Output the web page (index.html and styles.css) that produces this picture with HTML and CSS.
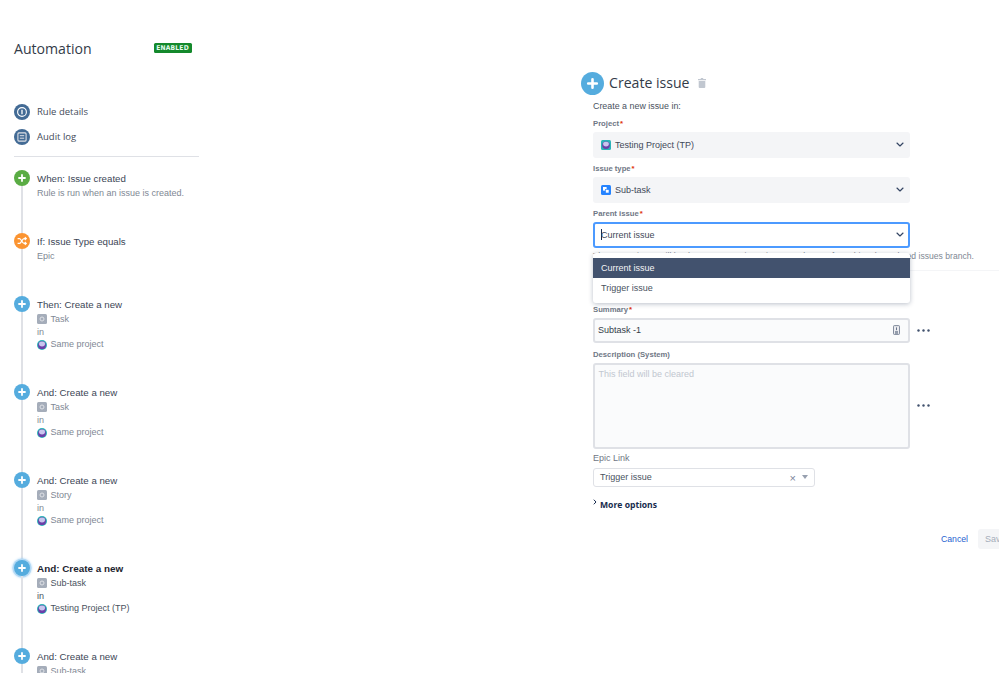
FILE: index.html
```html
<!DOCTYPE html>
<html lang="en">
<head>
<meta charset="utf-8">
<title>Automation</title>
<link rel="stylesheet" href="styles.css">
</head>
<body>
<svg class="sprite" aria-hidden="true">
  <symbol id="plus" viewBox="0 0 16 16"><path d="M8 5v6M5 8h6" stroke="#fff" stroke-width="1.8" stroke-linecap="round" fill="none"/></symbol>
  <symbol id="task" viewBox="0 0 10 10"><rect width="10" height="10" rx="1.5" fill="#a5adba"/><circle cx="5" cy="5" r="2" fill="none" stroke="#dfe1e6" stroke-width="1"/></symbol>
  <symbol id="proj" viewBox="0 0 10 10"><circle cx="5" cy="5" r="5" fill="#2bb3b8"/><circle cx="5" cy="5.2" r="3.9" fill="#6b3fa8"/><ellipse cx="5" cy="4" rx="3" ry="2.4" fill="#c9c5ee"/></symbol>
  <symbol id="chev" viewBox="0 0 10 6"><path d="M1.2 1.2 5 4.8l3.8-3.6" fill="none" stroke="#344563" stroke-width="1.5" stroke-linecap="round" stroke-linejoin="round"/></symbol>
  <symbol id="dots" viewBox="0 0 13 3"><circle cx="1.5" cy="1.5" r="1.2" fill="#42526e"/><circle cx="6.5" cy="1.5" r="1.2" fill="#42526e"/><circle cx="11.5" cy="1.5" r="1.2" fill="#42526e"/></symbol>
</svg>
<div class="page">
  <aside class="sidebar">
    <header class="side-head">
      <h1 class="side-title">Automation</h1>
      <span class="lozenge">ENABLED</span>
    </header>
    <nav class="side-nav">
      <a class="nav-row">
        <span class="nav-icon"><svg viewBox="0 0 16 16" width="16" height="16"><circle cx="8" cy="8" r="4.4" fill="none" stroke="#fff" stroke-width="1.1"/><path d="M8 5.7v4.6" stroke="#fff" stroke-width="1.3"/></svg></span>
        Rule details
      </a>
      <a class="nav-row">
        <span class="nav-icon"><svg viewBox="0 0 16 16" width="16" height="16"><rect x="3.9" y="3.9" width="8.2" height="8.2" rx="1" fill="none" stroke="#dfe1e6" stroke-width="1.1"/><path d="M5.8 6.7h4.4M5.8 9.2h4.4" stroke="#dfe1e6" stroke-width="1"/></svg></span>
        Audit log
      </a>
    </nav>
    <div class="timeline">
      <section class="step step-short">
        <div class="rail"><span class="node node-green"><svg width="16" height="16"><use href="#plus"/></svg></span><span class="rail-line"></span></div>
        <div class="step-body"><div class="step-title">When: Issue created</div><div class="step-line">Rule is run when an issue is created.</div></div>
      </section>
      <section class="step step-short">
        <div class="rail"><span class="node node-orange"><svg viewBox="0 0 16 16" width="16" height="16"><path d="M3.6 5.6h2c1.6 0 2.6 4.8 4.4 4.8h2M3.6 10.4h2c1.6 0 2.6-4.8 4.4-4.8h2M10.8 4.2l1.5 1.4-1.5 1.4M10.8 9l1.5 1.4-1.5 1.4" fill="none" stroke="#fff" stroke-width="1.15"/></svg></span><span class="rail-line"></span></div>
        <div class="step-body"><div class="step-title">If: Issue Type equals</div><div class="step-line">Epic</div></div>
      </section>
      <section class="step">
        <div class="rail"><span class="node"><svg width="16" height="16"><use href="#plus"/></svg></span><span class="rail-line"></span></div>
        <div class="step-body"><div class="step-title">Then: Create a new</div>
          <div class="step-line"><svg class="mini" width="10" height="10"><use href="#task"/></svg>Task</div><div class="step-line">in</div>
          <div class="step-line"><svg class="mini" width="10" height="10"><use href="#proj"/></svg>Same project</div></div>
      </section>
      <section class="step">
        <div class="rail"><span class="node"><svg width="16" height="16"><use href="#plus"/></svg></span><span class="rail-line"></span></div>
        <div class="step-body"><div class="step-title">And: Create a new</div>
          <div class="step-line"><svg class="mini" width="10" height="10"><use href="#task"/></svg>Task</div><div class="step-line">in</div>
          <div class="step-line"><svg class="mini" width="10" height="10"><use href="#proj"/></svg>Same project</div></div>
      </section>
      <section class="step">
        <div class="rail"><span class="node"><svg width="16" height="16"><use href="#plus"/></svg></span><span class="rail-line"></span></div>
        <div class="step-body"><div class="step-title">And: Create a new</div>
          <div class="step-line"><svg class="mini" width="10" height="10"><use href="#task"/></svg>Story</div><div class="step-line">in</div>
          <div class="step-line"><svg class="mini" width="10" height="10"><use href="#proj"/></svg>Same project</div></div>
      </section>
      <section class="step step-active">
        <div class="rail"><span class="node"><svg width="16" height="16"><use href="#plus"/></svg></span><span class="rail-line"></span></div>
        <div class="step-body"><div class="step-title">And: Create a new</div>
          <div class="step-line"><svg class="mini" width="10" height="10"><use href="#task"/></svg>Sub-task</div><div class="step-line">in</div>
          <div class="step-line"><svg class="mini" width="10" height="10"><use href="#proj"/></svg>Testing Project (TP)</div></div>
      </section>
      <section class="step">
        <div class="rail"><span class="node"><svg width="16" height="16"><use href="#plus"/></svg></span><span class="rail-line"></span></div>
        <div class="step-body"><div class="step-title">And: Create a new</div>
          <div class="step-line"><svg class="mini" width="10" height="10"><use href="#task"/></svg>Sub-task</div></div>
      </section>
    </div>
  </aside>

  <main class="panel">
    <div class="panel-head">
      <span class="big-node"><svg viewBox="0 0 16 16" width="23" height="23"><use href="#plus"/></svg></span>
      <h2 class="panel-title">Create issue</h2>
      <svg class="trash" viewBox="0 0 8 10" width="8" height="10"><path d="M2.8 0h2.4v1H8v1.2H0V1h2.8zM.7 3h6.6v6a1 1 0 0 1-1 1H1.7a1 1 0 0 1-1-1z" fill="#c1c7d0"/></svg>
    </div>
    <form class="form">
      <p class="lead">Create a new issue in:</p>
      <div class="label">Project<span class="req">*</span></div>
      <div class="select">
        <svg class="select-ico" viewBox="0 0 10 10" width="10" height="10"><rect width="10" height="10" rx="1.5" fill="#2bb3b8"/><circle cx="5" cy="5.2" r="3.8" fill="#6b3fa8"/><ellipse cx="5" cy="4.1" rx="2.9" ry="2.3" fill="#c9c5ee"/></svg>
        <span class="select-text">Testing Project (TP)</span>
        <svg width="8" height="5"><use href="#chev"/></svg>
      </div>
      <div class="label label-next">Issue type<span class="req">*</span></div>
      <div class="select">
        <svg class="select-ico" viewBox="0 0 10 10" width="10" height="10"><rect width="10" height="10" rx="1.5" fill="#2684ff"/><rect x="2" y="2" width="3.6" height="3.6" fill="#fff"/><rect x="4.6" y="4.6" width="3.4" height="3.4" fill="#fff" stroke="#2684ff" stroke-width=".6"/></svg>
        <span class="select-text">Sub-task</span>
        <svg width="8" height="5"><use href="#chev"/></svg>
      </div>
      <div class="label label-next">Parent issue<span class="req">*</span></div>
      <div class="combo">
        <div class="select select-focus">
          <span class="caret"></span>
          <span class="select-text">Current issue</span>
          <svg width="8" height="5"><use href="#chev"/></svg>
        </div>
        <ul class="menu">
          <li class="menu-item menu-item-on">Current issue</li>
          <li class="menu-item">Trigger issue</li>
        </ul>
      </div>
      <div class="help">The parent issue will be the current or trigger issue, or the one from this rule's related issues branch.</div>
      <div class="label label-summary">Summary<span class="req">*</span></div>
      <div class="field-row">
        <div class="input">
          <span class="input-text">Subtask -1</span>
          <svg class="smart" viewBox="0 0 8 11" width="7" height="10"><rect x=".5" y=".5" width="7" height="10" rx="1" fill="#ebecf0" stroke="#6b778c"/><path d="M4 2.5v3.2M2.3 7.6h3.4M2.3 9h3.4" stroke="#42526e" stroke-width=".9"/></svg>
        </div>
        <svg class="more" width="13" height="3"><use href="#dots"/></svg>
      </div>
      <div class="label label-desc">Description (System)</div>
      <div class="field-row">
        <div class="textarea">This field will be cleared</div>
        <svg class="more" width="13" height="3"><use href="#dots"/></svg>
      </div>
      <div class="epic-label">Epic Link</div>
      <div class="epic">
        <span class="epic-text">Trigger issue</span>
        <span class="epic-x">×</span>
        <span class="epic-arrow"></span>
      </div>
      <div class="more-opts">
        <svg viewBox="0 0 4 6" width="4" height="6"><path d="M.8.7 3 3 .8 5.3" fill="none" stroke="#172b4d" stroke-width="1"/></svg>
        <span>More options</span>
      </div>
      <div class="actions">
        <a class="cancel">Cancel</a>
        <button class="save" type="button">Save</button>
      </div>
    </form>
  </main>
</div>
</body>
</html>
```
FILE: styles.css
```css
* { box-sizing: border-box; }
html, body { margin: 0; padding: 0; background: #fff; }
body { font-family: "Liberation Sans", Arial, sans-serif; color: #42526e; overflow: hidden; }
.sprite { display: none; }
.page { display: flex; width: 999px; height: 673px; overflow: hidden; }

.sidebar { flex: none; width: 185px; margin-left: 14px; padding-top: 39px; }
.side-head { display: flex; justify-content: space-between; align-items: center; height: 19px; padding-right: 7.5px; }
.side-title { margin: 0; font: 400 14.1px/19px "Open Sans", sans-serif; color: #333b48; }
.lozenge { width: 38px; height: 10px; margin-top: -1.5px; text-align: center; background: #14892c; border-radius: 1.5px; color: #e3fcef; font: 700 6.7px/10px "DejaVu Sans Condensed", "Liberation Sans", sans-serif; letter-spacing: .2px; }

.side-nav { display: flex; flex-direction: column; gap: 9px; height: 62px; margin-top: 37px; padding-top: 9px; border-bottom: 1px solid #dfe1e6; }
.nav-row { display: flex; align-items: center; gap: 7px; height: 16px; font: 400 9.5px/16px "Open Sans", sans-serif; color: #444c5a; }
.nav-icon { display: flex; width: 16px; height: 16px; border-radius: 50%; background: #436b95; }

.timeline { margin-top: 13px; }
.step { display: flex; height: 88px; gap: 7px; }
.step-short { height: 63px; }
.rail { width: 16px; display: flex; flex-direction: column; align-items: center; flex: none; }
.rail-line { flex: 1; width: 2px; background: #dfe1e6; }
.node { display: block; flex: none; width: 16px; height: 16px; border-radius: 50%; background: #55acde; }
.node svg { display: block; }
.node-green { background: #5aac44; }
.node-orange { background: #fb9431; }
.step-body { padding-top: 2px; min-width: 0; white-space: nowrap; }
.step-title { font: 400 9.7px/13px "Liberation Sans", sans-serif; color: #3c4656; margin-bottom: 2px; }
.step-line { display: flex; align-items: center; gap: 3.5px; font: 400 9px/12.7px "Liberation Sans", sans-serif; color: #808894; }
.mini { flex: none; }
.step-active .step-title { font-weight: 700; font-size: 9.9px; color: #1d2430; }
.step-active .step-line { color: #4a5260; }
.step-active .node { box-shadow: 0 0 0 1.5px #b3d9f5, 0 0 3px 1px #79bdf0; }

.panel { flex: none; width: 440px; margin-left: 382px; padding-top: 71px; }
.panel-head { display: flex; align-items: center; height: 24px; }
.big-node { display: block; width: 23px; height: 23px; border-radius: 50%; background: #55acde; flex: none; }
.big-node svg { display: block; }
.panel-title { margin: 0 8px 0 5px; font: 400 14.1px/24px "Open Sans", sans-serif; color: #333b48; }
.form { margin-left: 12px; position: relative; }
.lead { margin: 4px 0 0; font: 400 8.9px/14px "Liberation Sans", sans-serif; color: #4a5260; }
.label { margin-top: 5px; font: 700 7.7px/12px "Liberation Sans", sans-serif; color: #6f7785; height: 11px; }
.label-next { margin-top: 5.3px; }
.req { color: #de350b; margin-left: 1px; }
.select { display: flex; align-items: center; width: 317px; height: 25.4px; margin-top: 3.3px; padding: 0 6px 0 8px; background: #f4f5f7; border-radius: 3px; }
.select-ico { flex: none; margin-right: 4px; }
.select-text { flex: 1; font: 400 9px/14px "Liberation Sans", sans-serif; color: #3f4857; }
.select-focus { background: #fff; border: 2px solid #4c9aff; padding: 0 4px 0 6px; }
.caret { width: 1px; height: 11px; margin-right: -1px; background: #172b4d; }
.combo { position: relative; }
.menu { position: absolute; left: 0; top: 31px; width: 317px; margin: 0; padding: 5px 0; list-style: none; background: #fff; border-radius: 3px; box-shadow: 0 1px 5px rgba(9,30,66,.28); z-index: 2; }
.menu-item { height: 20px; padding-left: 8px; font: 400 9px/20px "Liberation Sans", sans-serif; color: #4a5260; }
.menu-item-on { background: #42526e; color: #f4f5f7; }
.help { width: 406px; height: 23px; padding-top: 1px; border-bottom: 1px solid #f4f5f7; font: 400 8.6px/14px "Liberation Sans", sans-serif; color: #808894; white-space: nowrap; }
.label-summary { margin-top: 33px; }
.label-desc { margin-top: 6px; }
.field-row { display: flex; align-items: center; gap: 7px; margin-top: 3px; }
.input { display: flex; align-items: center; justify-content: space-between; width: 317px; height: 25px; padding: 0 8px 0 3px; background: #fafbfc; border: 2px solid #dfe1e6; border-radius: 3px; }
.input-text { font: 400 9px/14px "Liberation Sans", sans-serif; color: #333b48; }
.textarea { width: 317px; height: 86px; padding: 2px 3.5px; background: #fafbfc; border: 2px solid #dfe1e6; border-radius: 3px; font: 400 9px/14px "Liberation Sans", sans-serif; color: #c1c7d0; }
.epic-label { margin-top: 3.5px; font: 400 9px/12px "Liberation Sans", sans-serif; color: #6f7785; }
.epic { display: flex; align-items: center; width: 222px; height: 19px; margin-top: 3.5px; padding: 0 6px 0 6px; border: 1.5px solid #dfe1e6; border-radius: 3px; }
.epic-text { flex: 1; font: 400 9px/14px "Liberation Sans", sans-serif; color: #4a5260; }
.epic-x { margin-right: 6px; font: 400 11px/14px "Liberation Sans", sans-serif; color: #7a869a; padding-top: 2px; }
.epic-arrow { width: 0; height: 0; border-left: 3.5px solid transparent; border-right: 3.5px solid transparent; border-top: 4px solid #97a0af; }
.more-opts { display: flex; gap: 3px; margin-top: 11px; height: 14px; font: 700 8.6px/14px "Open Sans", sans-serif; color: #172b4d; }
.more-opts svg { margin-top: 1px; }
.actions { display: flex; justify-content: flex-end; align-items: center; gap: 10px; width: 428px; margin-top: 17.3px; }
.cancel { font: 400 8.7px/14px "Liberation Sans", sans-serif; color: #1f63d0; }
.save { width: 43px; height: 20px; padding: 0 0 0 7px; text-align: left; border: 0; border-radius: 3px; background: #f4f5f7; font: 400 9px/14px "Liberation Sans", sans-serif; color: #a5adba; }
```
